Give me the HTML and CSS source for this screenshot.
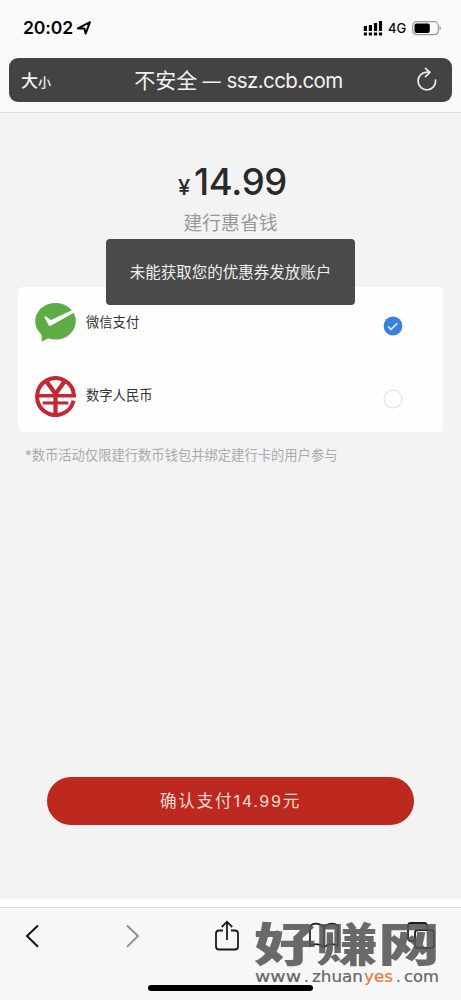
FILE: index.html
```html
<!DOCTYPE html>
<html lang="zh-CN">
<head>
<meta charset="utf-8">
<meta name="viewport" content="width=device-width">
<title>建行惠省钱</title>
<link rel="stylesheet" href="styles.css">
</head>
<body>
<div class="phone">
  <header class="browser-head">
    <div class="status">
      <div class="clock">20:02
        <svg class="location" viewBox="0 0 16 16"><path d="M1.8 8.4 14 2.2 9.6 13.6 8.4 8.6Z" fill="none" stroke="#080808" stroke-width="2" stroke-linejoin="round"/></svg>
      </div>
      <div class="signals">
        <svg class="cell" viewBox="0 0 20 15"><path d="M.8 5h3.2v5H.8zM5.8 4H9v6H5.8zM10.9 2h3.2v8h-3.2zM15.9 0h3.2v10h-3.2zM.8 11.4h3.2v3H.8zM5.8 11.4H9v3H5.8zM10.9 11.4h3.2v3h-3.2zM15.9 11.4h3.2v3h-3.2z"/></svg>
        <span class="network">4G</span>
        <svg class="battery" viewBox="0 0 30 15"><rect x=".7" y=".7" width="25.6" height="13" rx="4" fill="none" stroke="#999" stroke-width="1.2"/><rect x="2.5" y="2.4" width="15.3" height="9.6" rx="2"/><path d="M27.5 5v4.5q1.5-.7 1.5-2.25T27.5 5" fill="#999"/></svg>
      </div>
    </div>
    <div class="address">
      <span class="size">大<small>小</small></span>
      <span class="url">不安全<span class="domain"> <span class="dash">—</span> ssz.ccb.com</span></span>
      <svg class="reload" viewBox="0 0 22 26"><path d="M19.6 13a8.8 8.8 0 1 1-8.8-7.8h3.2M9.5 1.3l4.4 4-4.4 4.3" fill="none" stroke="#e9e9e9" stroke-width="1.7" stroke-linecap="round" stroke-linejoin="round"/></svg>
    </div>
  </header>

  <main class="page">
    <div class="amount"><span class="yen">¥</span>14.99</div>
    <div class="merchant">建行惠省钱</div>
    <section class="methods">
      <div class="method">
        <svg class="brand" viewBox="0 0 40 40"><ellipse cx="20" cy="18.8" rx="19.8" ry="17.9" fill="#5eac45"/><path d="M6.5 30v8.2q0 .8 1 .2l8-4.5z" fill="#5eac45"/><path d="M9 14.6q.7-1.1 1.9-.4l4.6 3.4L36 8.1l1.8 2.4-21.9 12.4q-1.9 1-2.8-.8z" fill="#fff"/></svg>
        <span class="name">微信支付</span>
        <svg class="choice" viewBox="0 0 20 20"><circle cx="10" cy="10" r="9.4" fill="#3c7fe4"/><path d="m5 10.4 3 3 6.3-6" fill="none" stroke="#e5f0ff" stroke-width="1.5"/></svg>
      </div>
      <div class="method">
        <svg class="brand" viewBox="0 0 40 40"><g fill="none" stroke="#c32935"><path d="M38 19A18 18 0 1 0 37.6 24" stroke-width="3.9"/><path d="m11 5 9 12.5L29 5M20 17v20" stroke-width="4.2"/><path d="M2 19.2h38" stroke-width="3.4"/><path d="M7.5 26.3h25" stroke-width="3"/></g></svg>
        <span class="name">数字人民币</span>
        <svg class="choice" viewBox="0 0 20 20"><circle cx="10" cy="10" r="9" fill="#fff" stroke="#dedede"/></svg>
      </div>
    </section>
    <p class="note">*数币活动仅限建行数币钱包并绑定建行卡的用户参与</p>
    <div class="pay">确认支付<span class="sum">14.99</span>元</div>
    <div class="toast">未能获取您的优惠券发放账户</div>
  </main>

  <footer class="toolbar">
    <svg class="tool" viewBox="0 0 32 32"><path d="M21 5.5 10 16l11 10.8" fill="none" stroke="#111" stroke-width="2"/></svg>
    <svg class="tool" viewBox="0 0 32 32"><path d="m13 5.5 11 10.5-11 10.8" fill="none" stroke="#8d8d8d" stroke-width="1.8"/></svg>
    <svg class="tool" viewBox="0 0 32 32"><path d="M12 10.5H8q-3 0-3 3v13q0 3 3 3h16q3 0 3-3v-13q0-3-3-3h-4M16 20V1.7M10.8 7 16 1.7 21.2 7" fill="none" stroke="#1b1b1b" stroke-width="1.8"/></svg>
    <svg class="tool" viewBox="0 0 32 32"><path d="M16 7Q8 1 2 6v20q7-4 14 1 7-5 14-1V6Q24 1 16 7v20" fill="none" stroke="#1b1b1b" stroke-width="1.7"/></svg>
    <svg class="tool" viewBox="0 0 32 32"><path d="M10 21H6q-3 0-3-3V6q0-3 3-3h13q3 0 3 3v4M13 10h13q3 0 3 3v12q0 3-3 3H13q-3 0-3-3V13q0-3 3-3" fill="none" stroke="#1b1b1b" stroke-width="1.8"/></svg>
    <div class="home"></div>
    <svg class="watermark" viewBox="0 0 190 84">
      <text class="mark-name" x="2" y="54" textLength="186" lengthAdjust="spacingAndGlyphs">好赚网</text>
      <text class="mark-url" y="75"><tspan x="3" textLength="46" lengthAdjust="spacingAndGlyphs">www</tspan><tspan x="52">.</tspan><tspan x="60" textLength="51" lengthAdjust="spacingAndGlyphs">zhuan</tspan><tspan class="mark-yes" x="112" textLength="29" lengthAdjust="spacingAndGlyphs">yes</tspan><tspan x="144">.</tspan><tspan x="152" textLength="35" lengthAdjust="spacingAndGlyphs">com</tspan></text>
    </svg>
  </footer>
</div>
</body>
</html>
```
FILE: styles.css
```css
* { box-sizing: border-box; }
body { margin: 0; font-family: Inter, "Noto Sans CJK SC", sans-serif; color: #333; }
svg { display: block; flex: none; }
.phone { width: 461px; height: 1000px; display: flex; flex-direction: column; overflow: hidden; background: #fff; }
.browser-head { height: 113px; flex: none; background: #fafafa; border-bottom: 1px solid #dedede; padding: 0 9px; }
.status { height: 58px; padding: 17px 10px 0 14px; display: flex; justify-content: space-between; align-items: flex-start; color: #080808; }
.clock { display: flex; align-items: center; gap: 3px; font-size: 17.6px; font-weight: 600; line-height: 22px; letter-spacing: -.15px; }
.location { width: 16px; height: 16px; }
.signals { display: flex; align-items: center; gap: 5px; padding-top: 3px; }
.cell { width: 20px; height: 15px; }
.network { font-size: 13px; font-weight: 500; line-height: 16px; width: 19px; }
.battery { width: 30px; height: 15px; }
.address { height: 44px; border-radius: 9px; background: #434343; color: #f2f2f2; display: grid; grid-template-columns: 60px 1fr 42px; align-items: center; padding: 2px 14px 0 12px; }
.size { font-size: 17px; font-weight: 500; line-height: 24px; white-space: nowrap; }
.size small { font-size: 13px; }
.url { font-size: 21px; line-height: 28px; text-align: center; white-space: nowrap; }
.domain { font-size: 20.5px; letter-spacing: -.6px; }
.dash { font-size: 18px; letter-spacing: .9px; }
.reload { width: 22px; height: 26px; justify-self: end; margin-top: -3px; }
.page { height: 786px; flex: none; background: #f3f3f3; padding: 45px 18px 0; position: relative; display: flex; flex-direction: column; }
.amount { height: 48px; padding-left: 4px; display: flex; justify-content: center; align-items: baseline; gap: 4px; font-size: 36.5px; font-weight: 500; line-height: 49px; color: #292929; letter-spacing: -.3px; }
.yen { font-size: 22px; }
.merchant { height: 30px; margin-top: 3px; text-align: center; font-size: 18.8px; line-height: 30px; color: #999; }
.methods { height: 145px; margin-top: 48px; background: #fefefe; border-radius: 5px; padding: 0 40px 0 17px; }
.method { height: 73px; display: flex; align-items: center; }
.method + .method { height: 72px; }
.brand { width: 41px; height: 41px; }
.method:first-child .brand { margin-top: -2px; }
.name { font-size: 13.3px; line-height: 20px; margin-left: 10px; flex: 1; margin-top: -4px; }
.method + .method .name { margin-top: -2px; }
.choice { width: 20px; height: 20px; margin-top: 5px; }
.note { margin: 12px 0 0 7px; font-size: 13.3px; line-height: 22px; color: #aaa; white-space: nowrap; }
.pay { width: 367px; height: 48px; margin: auto auto 74px 29px; border-radius: 24px; background: #bd291f; color: #f9d9d5; text-align: center; font-size: 16.6px; line-height: 49px; letter-spacing: 1.8px; }
.sum { font-size: 16.2px; letter-spacing: 1.6px; }
.toast { position: absolute; left: 106px; top: 126px; width: 249px; height: 66px; border-radius: 4px; background: #4a4a4a; color: #eee; font-size: 15.5px; line-height: 67px; text-align: center; white-space: nowrap; }
.toolbar { margin-top: 8px; flex: 1; border-top: 1px solid #dedede; background: #f7f7f7; position: relative; display: flex; justify-content: space-between; align-items: flex-start; padding: 12px 24px 0 17px; }
.tool { width: 32px; height: 32px; }
.home { position: absolute; left: 148px; bottom: 9px; width: 165px; height: 6px; border-radius: 3px; background: #000; }
.watermark { position: absolute; left: 252px; top: -1px; width: 190px; height: 84px; }
.mark-name { font: 900 46px/1 "Noto Sans CJK SC", sans-serif; fill: #555; fill-opacity: .88; }
.mark-url { font: 15px "DejaVu Sans", sans-serif; fill: #666; stroke: #666; stroke-width: .2px; }
.mark-yes { fill: #ef783f; stroke: #ef783f; }
```
